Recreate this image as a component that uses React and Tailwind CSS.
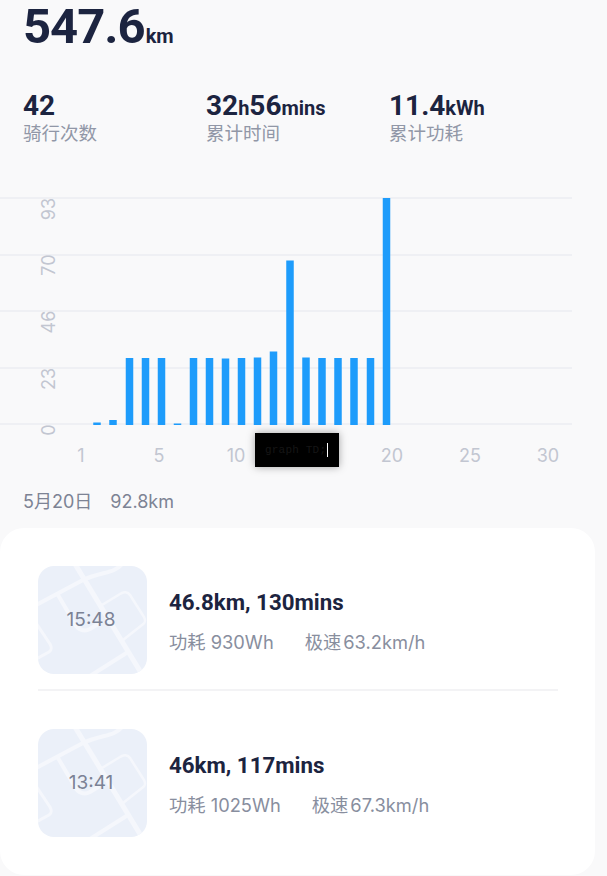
import React from 'react'

const sansCn = { fontFamily: '"Inter", "Noto Sans CJK SC", sans-serif' }

const gridLines = [198, 255, 311, 368, 424]
const yLabels = [
  { text: '93', y: 209 },
  { text: '70', y: 265 },
  { text: '46', y: 322 },
  { text: '23', y: 379 },
  { text: '0', y: 430 },
]
const xLabels = [
  { text: '1', x: 81 },
  { text: '5', x: 159 },
  { text: '10', x: 236 },
  { text: '20', x: 392 },
  { text: '25', x: 470 },
  { text: '30', x: 548 },
]
// top of each bar, in px from the top of the chart
const bars = [
  { x: 97, top: 422.5 }, { x: 113, top: 420 }, { x: 129.5, top: 358 }, { x: 145.5, top: 358 },
  { x: 161.5, top: 358 }, { x: 177.5, top: 423.5 }, { x: 193.5, top: 358 }, { x: 209.5, top: 358 },
  { x: 225.5, top: 358.5 }, { x: 241.5, top: 358 }, { x: 257.5, top: 357.5 }, { x: 273.5, top: 351.5 },
  { x: 290, top: 260.5 }, { x: 306, top: 357.5 }, { x: 322, top: 358 }, { x: 338, top: 358 },
  { x: 354, top: 358 }, { x: 370.5, top: 358 }, { x: 386.5, top: 198 },
]

const stats = [
  { parts: [['42', 0]], label: '骑行次数' },
  { parts: [['32', 0], ['h', 1], ['56', 0], ['mins', 1]], label: '累计时间' },
  { parts: [['11.4', 0], ['kWh', 1]], label: '累计功耗' },
]

const rides = [
  { time: '15:48', title: '46.8km, 130mins', power: '功耗 930Wh', speedLabel: '极速', speed: '63.2km/h' },
  { time: '13:41', title: '46km, 117mins', power: '功耗 1025Wh', speedLabel: '极速', speed: '67.3km/h' },
]

const MapThumb = ({ time }) => (
  <div className="relative w-[109px] h-[108px] shrink-0 rounded-[16px] overflow-hidden bg-[#ebf0f9] flex items-center justify-center pr-[3px]">
    <svg className="absolute inset-0" width="109" height="108" viewBox="0 0 109 108" fill="none" stroke="#f5f7fc" strokeLinecap="round" strokeLinejoin="round">
      <path d="M37 -2L105 110" strokeWidth="5" />
      <path d="M-2 39L45 14C58 8 70 7 76 4C80 2 82 1 84 -2" strokeWidth="4" />
      <path d="M20 29L37 58C40 64 46 66 52 63L60 58" strokeWidth="4" />
      <path d="M64 39L82 28C86 25 90 26 92 29L106 51C108 55 107 57 104 59L85 74" strokeWidth="2.5" />
      <path d="M-2 57L12 78C14 82 14 84 11 86L-2 93" strokeWidth="3" />
      <path d="M52 110L90 86" strokeWidth="4" />
    </svg>
    <span className="relative text-[19px] text-[#7b8295]" style={sansCn}>{time}</span>
  </div>
)

const App = () => {
  return (
    <div className="w-[607px] h-[876px] overflow-hidden bg-[#f9f9fa] relative" style={{ fontFamily: 'Roboto, sans-serif' }}>
      {/* Total distance */}
      <div className="pl-[23px] h-[56px] flex items-baseline text-[#1c2440] font-bold">
        <span className="text-[49px] leading-[54px] tracking-[-1px]">547.6</span>
        <span className="text-[20px] ml-[1px]">km</span>
      </div>

      {/* Summary */}
      <div className="mt-[33px] pl-[23px] grid grid-cols-[183px_183px_183px]">
        {stats.map((s) => (
          <div key={s.label} className="flex flex-col">
            <div className="flex items-baseline h-[33px] text-[#1c2440] font-bold">
              {s.parts.map(([t, small], i) => (
                <span key={i} className={small ? 'text-[20px] leading-[33px]' : 'text-[28px] leading-[33px]'}>{t}</span>
              ))}
            </div>
            <span className="text-[18.5px] leading-[22px] text-[#9197a7]" style={sansCn}>{s.label}</span>
          </div>
        ))}
      </div>

      {/* Chart */}
      <svg className="block mt-[45px]" width="607" height="300" viewBox="0 189 607 300" style={sansCn}>
        {gridLines.map((y) => (
          <rect key={y} x="0" y={y - 1} width="572" height="2" fill="#eff0f4" />
        ))}
        {bars.map((b) => (
          <rect key={b.x} x={b.x - 3.75} y={b.top} width="7.5" height={425 - b.top} fill="#1e9cfb" />
        ))}
        {yLabels.map((l) => (
          <text key={l.text} x="50" y={l.y} transform={`rotate(-90 50 ${l.y})`} dominantBaseline="middle" textAnchor="middle" fontSize="18" fill="#c2c6d1">{l.text}</text>
        ))}
        {xLabels.map((l) => (
          <text key={l.text} x={l.x} y="462" textAnchor="middle" fontSize="18" fill="#c2c6d1">{l.text}</text>
        ))}
      </svg>

      {/* Black overlay */}
      <div className="absolute left-[255px] top-[433px] w-[84px] h-[34px] bg-black shadow-[0_0_8px_rgba(0,0,0,0.35)] flex items-center pl-[10px]">
        <span className="text-[11px] text-[#161616] tracking-[0.2px]" style={{ fontFamily: '"Liberation Mono", monospace' }}>graph TD;</span>
        <span className="w-[1px] h-[14px] bg-white ml-[1px]" />
      </div>

      {/* Date */}
      <div className="pl-[23px] mt-[1px] text-[18px] leading-[24px] text-[#7d8394] flex gap-[18px]" style={sansCn}>
        <span>5月20日</span>
        <span>92.8km</span>
      </div>

      {/* Rides */}
      <div className="absolute left-0 top-[528px] w-[595px] h-[347px] bg-white rounded-[24px] pl-[38px] pr-[37px] pt-[38px]">
        {rides.map((r, i) => (
          <div key={r.time} className={i === 0 ? 'flex items-center gap-[22px] pb-[15px] border-b-2 border-[#f3f3f5]' : 'flex items-center gap-[22px] pt-[38px]'}>
            <MapThumb time={r.time} />
            <div className="flex flex-col gap-[15px] pt-[2px]">
              <span className="text-[22.3px] leading-[26px] font-bold text-[#1c2440]" style={{ fontFamily: 'Roboto, sans-serif' }}>{r.title}</span>
              <div className="flex gap-[31px] text-[18.3px] leading-[24px] text-[#888e9e]" style={sansCn}>
                <span>{r.power}</span>
                <span className="flex gap-[2px]"><span>{r.speedLabel}</span><span>{r.speed}</span></span>
              </div>
            </div>
          </div>
        ))}
      </div>
    </div>
  )
}

export default App
